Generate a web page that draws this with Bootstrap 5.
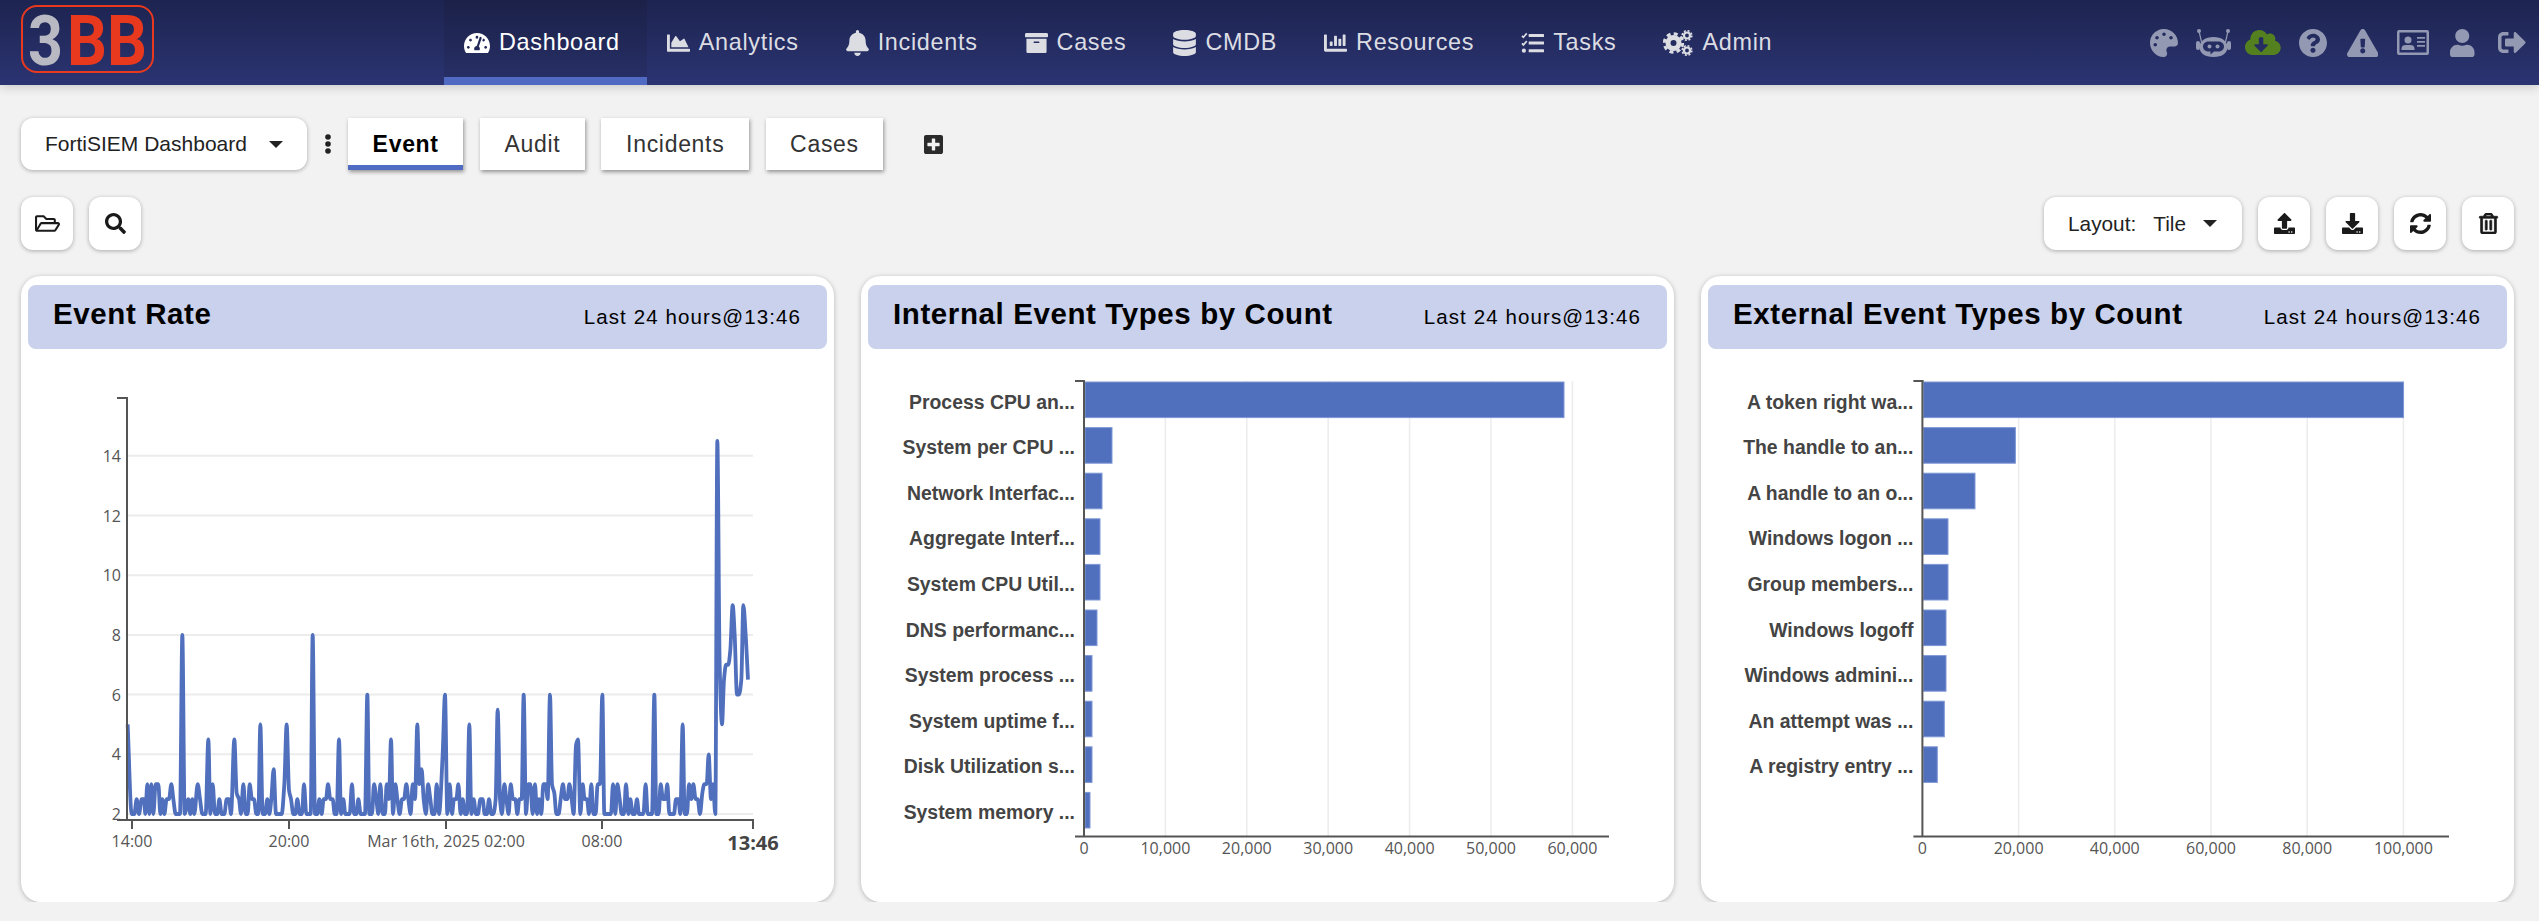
<!DOCTYPE html>
<html lang="en">
<head>
<meta charset="UTF-8">
<title>FortiSIEM Dashboard</title>
<link rel="stylesheet" href="https://cdn.jsdelivr.net/npm/bootstrap@5.3.3/dist/css/bootstrap.min.css">
<style>
body {
	background: #f2f2f2;
	font-family: "Liberation Sans", Arial, sans-serif;
	overflow: hidden;
}

.topbar {
	height: 85px;
	background: linear-gradient(180deg, #1d2450 0%, #2b3472 100%);
	box-shadow: 0 2px 10px rgba(0, 0, 0, 0.18);
	align-items: stretch;
	flex-wrap: nowrap;
}

.brand-logo {
	display: flex;
	align-items: center;
	margin: 0 283px 0 21px;
	padding: 0;
}

.topbar .nav-link {
	height: 85px;
	display: flex;
	align-items: center;
	gap: 9px;
	padding: 0 27px 0 20px !important;
	font-size: 23.4px;
	letter-spacing: 0.7px;
	color: #dcdde3;
}

.topbar .nav-link svg {
	width: 23px;
	height: 26px;
	fill: currentColor;
}

.topbar .nav-link svg.wide-26 {
	width: 26px;
}

.topbar .nav-link svg.wide-30 {
	width: 30px;
}

.topbar .nav-link.active {
	color: #fff;
	background: linear-gradient(180deg, #1b2148 0%, #283068 100%);
	box-shadow: inset 0 -8px 0 #5069c2;
}

.tool-icons {
	padding-right: 2px;
}

.tool-slot {
	width: 49.8px;
	flex: none;
	display: flex;
	align-items: center;
	justify-content: center;
	color: #9399b2;
}

.tool-slot svg {
	fill: currentColor;
	height: 28px;
}

.tool-slot.is-green {
	color: #55801f;
}

.page-wrap {
	padding: 33px 25px 0 21px;
}

.dash-select {
	width: 286px;
	height: 52px;
	padding: 0 24px;
	background: #fff;
	border: 0;
	border-radius: 12px;
	box-shadow: 0 1px 4px rgba(0, 0, 0, 0.3);
	font-size: 21px;
	color: #222;
	display: flex;
	align-items: center;
	justify-content: space-between;
}

.dash-select::after,
.layout-select::after {
	margin-left: 0;
	border-top-width: 7px;
	border-right-width: 7px;
	border-left-width: 7px;
}

.kebab-slot {
	width: 41px;
	display: flex;
	justify-content: center;
}

.dash-tab {
	height: 52px;
	padding: 0 24.6px;
	margin-right: 16.5px;
	background: #fff;
	display: flex;
	align-items: center;
	font-size: 23px;
	letter-spacing: 0.7px;
	color: #333;
	box-shadow: 1px 2px 4px rgba(0, 0, 0, 0.4);
	text-decoration: none;
}

.dash-tab.current {
	font-weight: 700;
	color: #000;
	box-shadow: inset 0 -5px 0 #4f6bc2, 1px 2px 4px rgba(0, 0, 0, 0.4);
}

.add-tab {
	margin-left: 24px;
	height: 19px;
	width: 19px;
	fill: #2b2b2b;
}

.tool-row {
	margin-top: 27px;
	height: 53px;
}

.square-btn {
	width: 52px;
	height: 53px;
	padding: 0;
	background: #fff;
	border: 0;
	border-radius: 12px;
	box-shadow: 0 1px 4px rgba(0, 0, 0, 0.3);
	display: flex;
	align-items: center;
	justify-content: center;
}

.square-btn svg {
	height: 21px;
	width: 25px;
	fill: #1a1a1a;
}

.trash-icon {
	stroke: #1a1a1a;
	stroke-width: 18;
}

.layout-select {
	width: 198px;
	height: 53px;
	padding: 0 25px 0 24px;
	background: #fff;
	border: 0;
	border-radius: 12px;
	box-shadow: 0 1px 4px rgba(0, 0, 0, 0.3);
	font-size: 20.8px;
	color: #222;
	display: flex;
	align-items: center;
	justify-content: space-between;
}

.tile-row {
	--bs-gutter-x: 27px;
	--bs-gutter-y: 0;
	margin-top: 26px;
}

.tile {
	height: 626px;
	background: #fff;
	border-radius: 20px;
	box-shadow: 0 1px 5px rgba(0, 0, 0, 0.25);
	overflow: hidden;
}

.tile-head {
	height: 64px;
	margin: 9px 7px 0;
	padding: 0 26px 0 25px;
	background: #c9d1ec;
	border-radius: 8px;
}

.tile-title {
	font-size: 29.5px;
	font-weight: 700;
	letter-spacing: 0.6px;
	color: #000;
	padding-bottom: 6px;
}

.tile-time {
	font-size: 20.5px;
	letter-spacing: 1.1px;
	color: #000;
}

.tile svg {
	display: block;
}

.axis-text {
	font-family: "Open Sans", sans-serif;
	font-size: 16px;
	fill: #555;
}

.bar-text {
	font-family: "Liberation Sans", sans-serif;
	font-size: 19.4px;
	font-weight: 700;
	fill: #444;
}
</style>
</head>
<body>
	<nav class="navbar navbar-expand navbar-dark p-0 topbar">
		<a class="navbar-brand brand-logo" href="#">
			<svg width="140" height="85" viewBox="21 0 140 85">
				<rect x="22" y="6" width="131" height="66" rx="15" fill="none" stroke="#e8391f" stroke-width="2"/>
				<text x="28" y="65" font-family="Roboto, sans-serif" font-weight="700" font-size="70" fill="#b8b9c2" textLength="35" lengthAdjust="spacingAndGlyphs">3</text>
				<text x="67" y="65" font-family="Roboto, sans-serif" font-weight="700" font-size="70" fill="#e8391f" textLength="80" lengthAdjust="spacingAndGlyphs">BB</text>
			</svg>
		</a>
		<ul class="navbar-nav">
			<li class="nav-item"><a class="nav-link active" href="#"><svg class="wide-26" viewBox="0 32 576 448"><path d="M288 32C128.94 32 0 160.94 0 320c0 52.8 14.25 102.26 39.06 144.8 5.61 9.62 16.3 15.2 27.44 15.2h443c11.14 0 21.83-5.58 27.44-15.2C561.75 422.26 576 372.8 576 320c0-159.06-128.94-288-288-288zm0 64c14.71 0 26.58 10.13 30.32 23.65-1.11 2.26-2.64 4.23-3.45 6.67l-9.22 27.67c-5.13 3.49-10.97 6.01-17.64 6.01-17.67 0-32-14.33-32-32S270.33 96 288 96zM96 384c-17.67 0-32-14.33-32-32s14.33-32 32-32 32 14.33 32 32-14.33 32-32 32zm48-160c-17.67 0-32-14.33-32-32s14.33-32 32-32 32 14.33 32 32-14.33 32-32 32zm246.77-72.41l-61.33 184C343.13 347.33 352 364.54 352 384c0 11.72-3.38 22.55-8.88 32H232.88c-5.5-9.45-8.88-20.28-8.88-32 0-33.94 26.5-61.43 59.9-63.59l61.34-184.01c4.17-12.56 17.73-19.45 30.36-15.17 12.57 4.19 19.35 17.79 15.17 30.36zm14.66 57.2l15.52-46.55c3.47-1.29 7.13-2.23 11.05-2.23 17.67 0 32 14.33 32 32s-14.33 32-32 32c-11.38-.01-20.89-6.28-26.57-15.22zM480 384c-17.67 0-32-14.33-32-32s14.33-32 32-32 32 14.33 32 32-14.33 32-32 32z"/></svg>Dashboard</a></li>
			<li class="nav-item"><a class="nav-link" href="#"><svg viewBox="0 64 512 384"><path d="M500 384c6.6 0 12 5.4 12 12v40c0 6.6-5.4 12-12 12H12c-6.6 0-12-5.4-12-12V76c0-6.6 5.4-12 12-12h40c6.6 0 12 5.4 12 12v308h436zM372.7 159.5L288 216l-85.3-113.7c-5.1-6.8-15.5-6.3-19.9 1L96 248v104h384l-89.9-187.8c-3.2-6.5-11.4-8.7-17.4-4.7z"/></svg>Analytics</a></li>
			<li class="nav-item"><a class="nav-link" href="#"><svg viewBox="0 0 448 512"><path d="M224 512c35.32 0 63.97-28.65 63.97-64H160.03c0 35.35 28.65 64 63.97 64zm215.39-149.71c-19.32-20.76-55.47-51.99-55.47-154.29 0-77.7-54.48-139.9-127.94-155.16V32c0-17.67-14.32-32-31.98-32s-31.98 14.33-31.98 32v20.84C118.56 68.1 64.08 130.3 64.08 208c0 102.3-36.15 133.53-55.47 154.29-6 6.45-8.66 14.16-8.61 21.71.11 16.4 12.98 32 32.1 32h383.8c19.12 0 32-15.6 32.1-32 .05-7.55-2.61-15.27-8.61-21.71z"/></svg>Incidents</a></li>
			<li class="nav-item"><a class="nav-link" href="#"><svg viewBox="0 32 512 448"><path d="M32 448c0 17.7 14.3 32 32 32h384c17.7 0 32-14.3 32-32V160H32v288zm160-212c0-6.6 5.4-12 12-12h104c6.6 0 12 5.4 12 12v8c0 6.6-5.4 12-12 12H204c-6.6 0-12-5.4-12-12v-8zM480 32H32C14.3 32 0 46.3 0 64v48c0 8.8 7.2 16 16 16h480c8.8 0 16-7.2 16-16V64c0-17.7-14.3-32-32-32z"/></svg>Cases</a></li>
			<li class="nav-item"><a class="nav-link" href="#"><svg viewBox="0 0 448 512"><path d="M448 73.143v45.714C448 159.143 347.667 192 224 192S0 159.143 0 118.857V73.143C0 32.857 100.333 0 224 0s224 32.857 224 73.143zM448 176v102.857C448 319.143 347.667 352 224 352S0 319.143 0 278.857V176c48.125 33.143 136.208 48.572 224 48.572S399.874 209.143 448 176zm0 160v102.857C448 479.143 347.667 512 224 512S0 479.143 0 438.857V336c48.125 33.143 136.208 48.572 224 48.572S399.874 369.143 448 336z"/></svg>CMDB</a></li>
			<li class="nav-item"><a class="nav-link" href="#"><svg viewBox="0 64 512 384"><path d="M332.8 320h38.4c6.4 0 12.8-6.4 12.8-12.8V172.8c0-6.4-6.4-12.8-12.8-12.8h-38.4c-6.4 0-12.8 6.4-12.8 12.8v134.4c0 6.4 6.4 12.8 12.8 12.8zm96 0h38.4c6.4 0 12.8-6.4 12.8-12.8V76.8c0-6.4-6.4-12.8-12.8-12.8h-38.4c-6.4 0-12.8 6.4-12.8 12.8v230.4c0 6.4 6.4 12.8 12.8 12.8zm-288 0h38.4c6.4 0 12.8-6.4 12.8-12.8v-70.4c0-6.4-6.4-12.8-12.8-12.8h-38.4c-6.4 0-12.8 6.4-12.8 12.8v70.4c0 6.4 6.4 12.8 12.8 12.8zm96 0h38.4c6.4 0 12.8-6.4 12.8-12.8V108.8c0-6.4-6.4-12.8-12.8-12.8h-38.4c-6.4 0-12.8 6.4-12.8 12.8v198.4c0 6.4 6.4 12.8 12.8 12.8zM496 384H64V80c0-8.84-7.16-16-16-16H16C7.16 64 0 71.16 0 80v336c0 17.67 14.33 32 32 32h464c8.84 0 16-7.16 16-16v-32c0-8.84-7.16-16-16-16z"/></svg>Resources</a></li>
			<li class="nav-item"><a class="nav-link" href="#"><svg viewBox="0 0 24 24"><path d="M1 4.5l1.5 1.5L6 2" fill="none" stroke="currentColor" stroke-width="1.8"/><path d="M1 12.5l1.5 1.5L6 10" fill="none" stroke="currentColor" stroke-width="1.8"/><circle cx="3" cy="20" r="2.2"/><rect x="8" y="2.5" width="16" height="3.2" rx=".6"/><rect x="8" y="10.4" width="16" height="3.2" rx=".6"/><rect x="8" y="18.4" width="16" height="3.2" rx=".6"/></svg>Tasks</a></li>
			<li class="nav-item"><a class="nav-link" href="#"><svg class="wide-30" viewBox="0 0 30 26"><circle cx="10.5" cy="13" r="5.5" fill="none" stroke="currentColor" stroke-width="5"/><circle cx="10.5" cy="13" r="9.2" fill="none" stroke="currentColor" stroke-width="3" stroke-dasharray="4 3.22"/><circle cx="24" cy="5.5" r="3" fill="none" stroke="currentColor" stroke-width="2.2"/><circle cx="24" cy="5.5" r="4.8" fill="none" stroke="currentColor" stroke-width="1.6" stroke-dasharray="2 1.77"/><circle cx="24" cy="20.5" r="3" fill="none" stroke="currentColor" stroke-width="2.2"/><circle cx="24" cy="20.5" r="4.8" fill="none" stroke="currentColor" stroke-width="1.6" stroke-dasharray="2 1.77"/></svg>Admin</a></li>
		</ul>
		<div class="d-flex align-items-center ms-auto tool-icons">
			<span class="tool-slot"><svg viewBox="0 0 512 512"><path d="M204.3 5C104.9 24.4 24.8 104.3 5.2 203.4c-37 187 131.7 326.4 258.8 306.7 41.2-6.4 61.4-54.6 42.5-91.7-23.1-45.4 9.9-98.4 60.9-98.4h79.7c35.8 0 64.8-29.6 64.9-65.3C511.5 97.1 368.1-26.9 204.3 5zM96 320c-17.7 0-32-14.3-32-32s14.3-32 32-32 32 14.3 32 32-14.3 32-32 32zm32-128c-17.7 0-32-14.3-32-32s14.3-32 32-32 32 14.3 32 32-14.3 32-32 32zm128-64c-17.7 0-32-14.3-32-32s14.3-32 32-32 32 14.3 32 32-14.3 32-32 32zm128 64c-17.7 0-32-14.3-32-32s14.3-32 32-32 32 14.3 32 32-14.3 32-32 32z"/></svg></span>
			<span class="tool-slot"><svg viewBox="0 0 35 28"><circle cx="3" cy="2" r="2"/><circle cx="32" cy="2" r="2"/><path d="M3 2l2.5 11M32 2l-2.5 11" stroke="currentColor" stroke-width="1.2"/><rect x="0" y="12" width="4" height="9" rx="2"/><rect x="31" y="12" width="4" height="9" rx="2"/><path fill-rule="evenodd" d="M17.500 8c8 0 14 4 14 10s-5 10-14 10-14-4-14-10 6-10 14-10zM13 12.500c-3.500 0-6 2-6 5s2.500 5 6 5h1.500v3l3.500-3h4c3.500 0 6-2 6-5s-2.500-5-6-5z"/><circle cx="13.500" cy="17.500" r="2"/><circle cx="21.500" cy="17.500" r="2"/></svg></span>
			<span class="tool-slot is-green"><svg viewBox="0 32 640 448" style="height:25px"><path d="M537.6 226.6c4.1-10.7 6.4-22.4 6.4-34.6 0-53-43-96-96-96-19.7 0-38.1 6-53.3 16.2C367 64.2 315.3 32 256 32c-88.4 0-160 71.6-160 160 0 2.7.1 5.4.2 8.1C40.2 219.8 0 273.2 0 336c0 79.5 64.5 144 144 144h368c70.7 0 128-57.3 128-128 0-61.9-44-113.6-102.4-125.4zm-132.9 88.7L299.3 420.7c-6.2 6.2-16.4 6.2-22.6 0L171.3 315.3c-10.1-10.1-2.9-27.3 11.3-27.3H248V176c0-8.8 7.2-16 16-16h48c8.8 0 16 7.2 16 16v112h65.4c14.2 0 21.4 17.2 11.3 27.3z"/></svg></span>
			<span class="tool-slot"><svg viewBox="8 8 496 496"><path d="M504 256c0 136.997-111.043 248-248 248S8 392.997 8 256C8 119.083 119.043 8 256 8s248 111.083 248 248zM262.655 90c-54.497 0-89.255 22.957-116.549 63.758-3.536 5.286-2.353 12.415 2.715 16.258l34.699 26.31c5.205 3.947 12.621 3.008 16.665-2.122 17.864-22.658 30.113-35.797 57.303-35.797 20.429 0 45.698 13.148 45.698 32.958 0 14.976-12.363 22.667-32.534 33.976C247.128 238.528 216 254.941 216 296v4c0 6.627 5.373 12 12 12h56c6.627 0 12-5.373 12-12v-1.333c0-28.462 83.186-29.647 83.186-106.667 0-58.002-60.165-102-116.531-102zM256 338c-25.365 0-46 20.635-46 46 0 25.364 20.635 46 46 46s46-20.636 46-46c0-25.365-20.635-46-46-46z"/></svg></span>
			<span class="tool-slot"><svg viewBox="0 0 576 512"><path d="M569.517 440.013C587.975 472.007 564.806 512 527.94 512H48.054c-36.937 0-59.999-40.055-41.577-71.987L246.423 24.028c18.467-32.009 64.72-31.951 83.154 0l239.94 416.985zM288 354c-25.405 0-46 20.595-46 46s20.595 46 46 46 46-20.595 46-46-20.595-46-46-46zm-43.673-165.346l7.418 136c.347 6.364 5.609 11.346 11.982 11.346h48.546c6.373 0 11.635-4.982 11.982-11.346l7.418-136c.375-6.874-5.098-12.654-11.982-12.654h-63.383c-6.884 0-12.356 5.78-11.981 12.654z"/></svg></span>
			<span class="tool-slot"><svg viewBox="0 0 32 25" style="height:25px"><path fill-rule="evenodd" d="M2 0h28a2 2 0 0 1 2 2v21a2 2 0 0 1-2 2H2a2 2 0 0 1-2-2V2a2 2 0 0 1 2-2zm.500 2.500v20h27v-20z"/><circle cx="11" cy="10" r="3.500"/><path d="M4.500 20v-1.500c0-2.500 2-3.500 4-3.500h5c2 0 4 1 4 3.500V20z"/><rect x="20" y="7" width="8" height="1.700"/><rect x="20" y="11" width="8" height="1.700"/><rect x="20" y="15" width="8" height="1.700"/></svg></span>
			<span class="tool-slot"><svg viewBox="0 0 448 512"><path d="M224 256c70.7 0 128-57.3 128-128S294.7 0 224 0 96 57.3 96 128s57.3 128 128 128zm89.6 32h-16.700c-22.200 10.200-46.900 16-72.900 16s-50.600-5.800-72.900-16h-16.700C60.200 288 0 348.200 0 422.400V464c0 26.500 21.500 48 48 48h352c26.500 0 48-21.500 48-48v-41.600c0-74.200-60.200-134.400-134.400-134.400z"/></svg></span>
			<span class="tool-slot"><svg viewBox="0 64 512 384" style="height:21px"><path d="M497 273L329 441c-15 15-41 4.500-41-17v-96H152c-13.300 0-24-10.700-24-24v-96c0-13.300 10.700-24 24-24h136V88c0-21.400 25.900-32 41-17l168 168c9.300 9.400 9.300 24.600 0 34zM192 436v-40c0-6.600-5.400-12-12-12H96c-17.700 0-32-14.300-32-32V160c0-17.700 14.300-32 32-32h84c6.600 0 12-5.400 12-12V76c0-6.600-5.400-12-12-12H96c-53 0-96 43-96 96v192c0 53 43 96 96 96h84c6.600 0 12-5.400 12-12z"/></svg></span>
		</div>
	</nav>

	<main class="page-wrap">
		<div class="d-flex align-items-center">
			<button type="button" class="btn dropdown-toggle dash-select">FortiSIEM Dashboard</button>
			<span class="kebab-slot"><svg width="8" height="20" viewBox="0 0 8 20" fill="#222"><circle cx="4" cy="3" r="2.800"/><circle cx="4" cy="10" r="2.800"/><circle cx="4" cy="17" r="2.800"/></svg></span>
			<a class="dash-tab current" href="#">Event</a>
			<a class="dash-tab" href="#">Audit</a>
			<a class="dash-tab" href="#">Incidents</a>
			<a class="dash-tab" href="#">Cases</a>
			<svg class="add-tab" viewBox="0 32 448 448"><path d="M400 32H48C21.500 32 0 53.500 0 80v352c0 26.500 21.500 48 48 48h352c26.500 0 48-21.500 48-48V80c0-26.500-21.500-48-48-48zm-32 252c0 6.600-5.400 12-12 12h-92v92c0 6.600-5.400 12-12 12h-56c-6.600 0-12-5.400-12-12v-92H92c-6.600 0-12-5.400-12-12v-56c0-6.600 5.400-12 12-12h92v-92c0-6.600 5.400-12 12-12h56c6.600 0 12 5.400 12 12v92h92c6.600 0 12 5.400 12 12v56z"/></svg>
		</div>

		<div class="d-flex align-items-center tool-row">
			<button type="button" class="btn square-btn me-3"><svg viewBox="0 64 576 384"><path d="M527.900 224H480v-48c0-26.500-21.500-48-48-48H272l-64-64H48C21.500 64 0 85.500 0 112v288c0 26.500 21.500 48 48 48h400c16.500 0 31.900-8.500 40.700-22.600l79.900-128c20-31.900-3-73.400-40.700-73.400zM48 118c0-3.300 2.700-6 6-6h134.100l64 64H426c3.300 0 6 2.700 6 6v42H152c-16.800 0-32.400 8.800-41.100 23.200L48 351.400zm400 282H72l77.200-128H528z"/></svg></button>
			<button type="button" class="btn square-btn"><svg viewBox="0 0 512 512"><path d="M505 442.700L405.300 343c-4.500-4.500-10.600-7-17-7H372c27.600-35.300 44-79.700 44-128C416 93.100 322.900 0 208 0S0 93.100 0 208s93.100 208 208 208c48.300 0 92.700-16.400 128-44v16.300c0 6.400 2.500 12.500 7 17l99.700 99.700c9.400 9.400 24.600 9.400 33.900 0l28.300-28.300c9.400-9.400 9.400-24.600.1-34zM208 336c-70.700 0-128-57.200-128-128 0-70.700 57.200-128 128-128 70.700 0 128 57.200 128 128 0 70.700-57.200 128-128 128z"/></svg></button>
			<button type="button" class="btn dropdown-toggle layout-select ms-auto me-3"><span>Layout:</span><span>Tile</span></button>
			<button type="button" class="btn square-btn me-3"><svg viewBox="0 0 512 512"><path d="M296 384h-80c-13.300 0-24-10.700-24-24V192h-87.700c-17.800 0-26.700-21.500-14.100-34.100L242.300 5.700c7.500-7.500 19.800-7.500 27.300 0l152.200 152.200c12.600 12.600 3.700 34.100-14.100 34.100H320v168c0 13.300-10.700 24-24 24zm216-8v112c0 13.300-10.700 24-24 24H24c-13.300 0-24-10.700-24-24V376c0-13.300 10.700-24 24-24h136v8c0 30.900 25.100 56 56 56h80c30.900 0 56-25.100 56-56v-8h136c13.300 0 24 10.700 24 24zm-124 88c0-11-9-20-20-20s-20 9-20 20 9 20 20 20 20-9 20-20zm64 0c0-11-9-20-20-20s-20 9-20 20 9 20 20 20 20-9 20-20z"/></svg></button>
			<button type="button" class="btn square-btn me-3"><svg viewBox="0 0 512 512"><path d="M216 0h80c13.300 0 24 10.700 24 24v168h87.700c17.800 0 26.700 21.500 14.100 34.100L269.700 378.300c-7.500 7.500-19.800 7.500-27.300 0L90.100 226.100c-12.600-12.600-3.700-34.100 14.100-34.100H192V24c0-13.300 10.700-24 24-24zm296 376v112c0 13.300-10.700 24-24 24H24c-13.300 0-24-10.700-24-24V376c0-13.300 10.700-24 24-24h146.700l49 49c20.100 20.100 52.500 20.100 72.600 0l49-49H488c13.300 0 24 10.700 24 24zm-124 88c0-11-9-20-20-20s-20 9-20 20 9 20 20 20 20-9 20-20zm64 0c0-11-9-20-20-20s-20 9-20 20 9 20 20 20 20-9 20-20z"/></svg></button>
			<button type="button" class="btn square-btn me-3"><svg viewBox="8 8 496 496"><path d="M370.720 133.280C339.458 104.008 298.888 87.962 255.848 88c-77.458.068-144.328 53.178-162.791 126.850-1.344 5.363-6.122 9.150-11.651 9.150H24.103c-7.498 0-13.194-6.807-11.807-14.176C33.933 94.924 134.813 8 256 8c66.448 0 126.791 26.136 171.315 68.685L463.030 40.970C478.149 25.851 504 36.559 504 57.941V192c0 13.255-10.745 24-24 24H345.941c-21.382 0-32.090-25.851-16.971-40.971l41.750-41.749zM32 296h134.059c21.382 0 32.090 25.851 16.971 40.971l-41.750 41.750c31.262 29.273 71.835 45.319 114.876 45.280 77.418-.07 144.315-53.144 162.787-126.849 1.344-5.363 6.122-9.150 11.651-9.150h57.304c7.498 0 13.194 6.807 11.807 14.176C478.067 417.076 377.187 504 256 504c-66.448 0-126.791-26.136-171.315-68.685L48.970 471.030C33.851 486.149 8 475.441 8 454.059V320c0-13.255 10.745-24 24-24z"/></svg></button>
			<button type="button" class="btn square-btn"><svg class="trash-icon" viewBox="0 0 448 512"><path d="M268 416h24a12 12 0 0 0 12-12V188a12 12 0 0 0-12-12h-24a12 12 0 0 0-12 12v216a12 12 0 0 0 12 12zM432 80h-82.410l-34-56.700A48 48 0 0 0 274.410 0H173.590a48 48 0 0 0-41.160 23.300L98.410 80H16A16 16 0 0 0 0 96v16a16 16 0 0 0 16 16h16v336a48 48 0 0 0 48 48h288a48 48 0 0 0 48-48V128h16a16 16 0 0 0 16-16V96a16 16 0 0 0-16-16zM171.840 50.910A6 6 0 0 1 177 48h94a6 6 0 0 1 5.150 2.910L293.610 80H154.390zM368 464H80V128h288zm-212-48h24a12 12 0 0 0 12-12V188a12 12 0 0 0-12-12h-24a12 12 0 0 0-12 12v216a12 12 0 0 0 12 12z"/></svg></button>
		</div>

		<div class="row row-cols-3 tile-row">
			<div class="col">
				<div class="tile">
					<div class="tile-head d-flex justify-content-between align-items-center">
						<span class="tile-title">Event Rate</span>
						<span class="tile-time">Last 24 hours@13:46</span>
					</div>
					<div id="chartRate"></div>
				</div>
			</div>
			<div class="col">
				<div class="tile">
					<div class="tile-head d-flex justify-content-between align-items-center">
						<span class="tile-title">Internal Event Types by Count</span>
						<span class="tile-time">Last 24 hours@13:46</span>
					</div>
					<div id="chartInternal"></div>
				</div>
			</div>
			<div class="col">
				<div class="tile">
					<div class="tile-head d-flex justify-content-between align-items-center">
						<span class="tile-title">External Event Types by Count</span>
						<span class="tile-time">Last 24 hours@13:46</span>
					</div>
					<div id="chartExternal"></div>
				</div>
			</div>
		</div>
	</main>

	<script src="https://cdn.jsdelivr.net/npm/bootstrap@5.3.3/dist/js/bootstrap.bundle.min.js"></script>
	<script>
		const BLUE = '#5070bd';
		const AXIS = '#555';
		const GRID = '#ececec';

		// the svg viewBox uses page pixels so numbers read straight off the screenshot
		function openSvg(cardX) {
			return '<svg width="813" height="553" viewBox="' + cardX + ' 349 813 553">';
		}

		function line(x1, y1, x2, y2, color, w) {
			return '<line x1="' + x1 + '" y1="' + y1 + '" x2="' + x2 + '" y2="' + y2 + '" stroke="' + color + '" stroke-width="' + w + '"/>';
		}

		function label(x, y, txt, anchor, cls) {
			return '<text x="' + x + '" y="' + y + '" text-anchor="' + anchor + '" dominant-baseline="central" class="' + cls + '">' + txt + '</text>';
		}

		// monotone cubic through the points
		function monotonePath(pts) {
			const n = pts.length, m = [], s = [];
			for (let i = 0; i < n - 1; i++) s[i] = (pts[i + 1][1] - pts[i][1]) / (pts[i + 1][0] - pts[i][0]);
			m[0] = s[0];
			m[n - 1] = s[n - 2];
			for (let i = 1; i < n - 1; i++) m[i] = s[i - 1] * s[i] <= 0 ? 0 : 2 * s[i - 1] * s[i] / (s[i - 1] + s[i]);
			let d = 'M' + pts[0][0] + ' ' + pts[0][1];
			for (let i = 0; i < n - 1; i++) {
				const h = (pts[i + 1][0] - pts[i][0]) / 3;
				d += 'C' + (pts[i][0] + h) + ' ' + (pts[i][1] + m[i] * h) + ' ' + (pts[i + 1][0] - h) + ' ' + (pts[i + 1][1] - m[i + 1] * h) + ' ' + pts[i + 1][0] + ' ' + pts[i + 1][1];
			}
			return d;
		}

		// x read from the left half of the chart (40 + x / 3), value on the y axis
		const rateLeft = [[263,5],[275,2],[283,2],[290,2.5],[297,2],[305,2.5],[312,2.5],[316,2],[322,3],[328,2],[334,3],[340,2],[347,3],[355,3],[361,2],[367,2.5],[373,2],[380,2.5],[387,2.5],[394,3],[400,2.5],[407,2],[420,2],[427,8],[434,2],[445,2.5],[451,2],[457,2.5],[463,2],[473,3],[480,2.5],[487,2],[497,2],[505,4.5],[511,2],[518,3],[525,2],[532,2],[538,2.5],[545,2],[553,2],[560,2.5],[567,2.5],[573,2],[583,4.5],[590,2.7],[597,2.5],[603,2],[610,3],[617,2],[623,2],[629,3],[636,2.5],[642,2.5],[649,2],[655,2],[661,5],[668,2],[675,2],[682,2.5],[688,2],[694,2.5],[701,3.5],[708,2],[725,2],[733,3],[740,5],[747,2.8],[753,2.5],[760,2],[766,2],[772,2.5],[779,2],[786,2],[792,3],[799,2],[812,2],[818,8],[825,2],[832,2],[838,2.5],[845,2],[851,2.5],[858,2.5],[864,3],[871,2.5],[878,2.5],[884,2],[890,2],[897,4.5],[903,2],[910,2.5],[916,2],[929,2],[936,3],[942,2],[949,2],[955,2.5],[962,2],[975,2],[982,6],[988,2],[996,2],[1002,3],[1009,2.5],[1015,2],[1021,3],[1028,2],[1035,2],[1040,3],[1047,2.5],[1053,4.5],[1059,2],[1066,3],[1072,2.5],[1079,2],[1086,2.5],[1092,2.5],[1099,3],[1105,2.5],[1112,2],[1118,3],[1125,2.5],[1132,5],[1138,3],[1145,3.5],[1151,2.5],[1158,2],[1164,3],[1171,2.5],[1177,2],[1184,2],[1190,3],[1197,2]];
		// right half (440 + x / 3)
		const rateRight = [[8,4],[15,6],[22,2],[29,3],[36,2],[42,2.5],[49,2.5],[55,3],[62,2],[68,2.5],[75,2],[81,2],[88,5],[94,2],[101,2.5],[108,2],[114,2],[121,2.5],[128,2.5],[134,2],[141,2],[147,2.5],[154,2],[160,2],[167,2.5],[173,5.5],[180,2.5],[186,2],[193,3],[199,2.5],[206,2],[212,3],[219,2.5],[226,2.5],[232,2],[238,2.5],[245,2.5],[251,6],[258,2],[265,3],[271,3],[278,2],[285,3],[291,2],[297,2.5],[304,2],[310,3],[317,3],[323,2.5],[330,6],[336,3],[343,2.7],[349,2],[356,2],[362,2.5],[369,3],[375,2.5],[382,2.5],[388,3],[395,2.5],[401,2],[408,4.3],[414,4.5],[421,2],[428,3],[434,2.5],[441,2.5],[447,2],[454,3],[460,2],[467,2],[473,3],[480,3],[487,6],[493,2],[513,2],[519,3],[526,2],[532,3],[539,2.5],[545,2],[552,2],[558,3],[565,2],[571,2.5],[578,2],[584,2],[591,2.5],[597,2],[610,2],[617,3],[623,2],[636,2],[643,6],[649,2],[656,2],[662,3],[669,2.5],[676,2.5],[682,3],[688,2],[702,2],[708,2.5],[715,2.5],[721,2],[728,5],[734,2],[741,2],[747,3],[754,2.5],[760,3],[767,2.5],[773,2.5],[780,2],[787,2.7],[793,3],[800,3],[806,4],[813,2.5],[819,3],[826,2],[832,14.5],[839,7],[846,5],[852,6.5],[858,7],[865,7],[871,7.5],[878,9],[884,8],[891,6],[897,6],[904,6.5],[910,9],[917,8],[924,6.5]];

		function drawRate() {
			const yOf = v => 814 - (v - 2) * 29.85;
			let s = openSvg(21);
			[4, 6, 8, 10, 12, 14, 2].forEach(v => {
				s += line(128, yOf(v), 753, yOf(v), GRID, 2);
				s += label(121, yOf(v), v, 'end', 'axis-text');
			});
			const pts = rateLeft.map(p => [40 + p[0] / 3, yOf(p[1])]).concat(rateRight.map(p => [440 + p[0] / 3, yOf(p[1])]));
			s += '<path d="' + monotonePath(pts) + '" fill="none" stroke="' + BLUE + '" stroke-width="3.8"/>';
			s += line(127, 398, 127, 821, AXIS, 2) + line(117, 398, 128, 398, AXIS, 2) + line(117, 820, 754, 820, AXIS, 2);
			[[132, '14:00'], [289, '20:00'], [446, 'Mar 16th, 2025 02:00'], [602, '08:00']].forEach(t => {
				s += line(t[0], 820, t[0], 829, AXIS, 2);
				s += label(t[0], 841, t[1], 'middle', 'axis-text');
			});
			s += line(753, 820, 753, 829, AXIS, 2);
			s += '<text x="753" y="842" text-anchor="middle" dominant-baseline="central" font-family="Open Sans, sans-serif" font-weight="700" font-size="20" fill="#444">13:46</text>';
			document.getElementById('chartRate').innerHTML = s + '</svg>';
		}

		function drawBars(id, cardX, axisX, pxPerUnit, ticks, xEnd, rows) {
			let s = openSvg(cardX);
			ticks.forEach(t => {
				const x = axisX + t * pxPerUnit;
				if (t > 0) s += line(x, 381, x, 836, GRID, 1.5);
				s += label(x, 848, t.toLocaleString('en-US'), 'middle', 'axis-text');
			});
			rows.forEach((r, i) => {
				const y = 382 + i * 45.6;
				s += '<rect x="' + (axisX + 1) + '" y="' + y + '" width="' + (r[1] - axisX - 1) + '" height="35.6" fill="' + BLUE + '" stroke="#7f97d6" stroke-width="1"/>';
				s += label(axisX - 9, y + 19.5, r[0], 'end', 'bar-text');
			});
			s += line(axisX, 380, axisX, 837, AXIS, 2) + line(axisX - 9, 381, axisX + 1, 381, AXIS, 2) + line(axisX - 9, 836.5, xEnd, 836.5, AXIS, 2);
			document.getElementById(id).innerHTML = s + '</svg>';
		}

		drawRate();
		drawBars('chartInternal', 861, 1084, 0.00814, [0, 10000, 20000, 30000, 40000, 50000, 60000], 1609, [
			['Process CPU an...', 1564], ['System per CPU ...', 1112], ['Network Interfac...', 1102], ['Aggregate Interf...', 1100], ['System CPU Util...', 1100],
			['DNS performanc...', 1097], ['System process ...', 1092], ['System uptime f...', 1092], ['Disk Utilization s...', 1092], ['System memory ...', 1090]
		]);
		drawBars('chartExternal', 1701, 1922.4, 0.00481, [0, 20000, 40000, 60000, 80000, 100000], 2449, [
			['A token right wa...', 2403.5], ['The handle to an...', 2015.4], ['A handle to an o...', 1975], ['Windows logon ...', 1948], ['Group members...', 1948],
			['Windows logoff', 1946], ['Windows admini...', 1946], ['An attempt was ...', 1944.3], ['A registry entry ...', 1937.3]
		]);
	</script>
</body>
</html>
